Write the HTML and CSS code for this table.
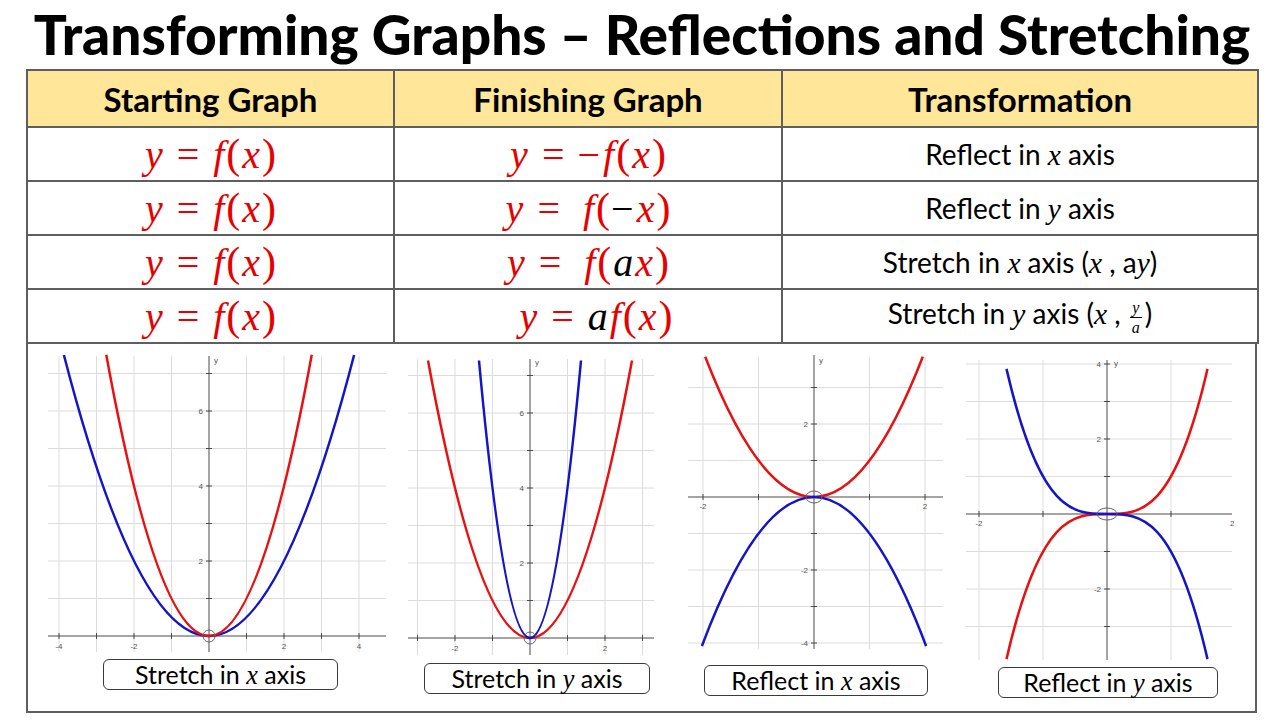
FILE: index.html
```html
<!DOCTYPE html>
<html lang="en">
<head>
<meta charset="utf-8">
<title>Transforming Graphs – Reflections and Stretching</title>
<link rel="stylesheet" href="styles.css">
</head>
<body>
<h1 class="title">Transforming Graphs – Reflections and Stretching</h1>
<table class="summary">
  <colgroup><col class="col-start"><col class="col-finish"><col class="col-trans"></colgroup>
  <thead>
    <tr class="head-row"><th>Starting Graph</th><th>Finishing Graph</th><th>Transformation</th></tr>
  </thead>
  <tbody>
    <tr>
      <td><span class="math"><i>y</i><span class="eq">=</span><i>f</i><span class="par">(</span><i>x</i><span class="par">)</span></span></td>
      <td><span class="math"><i>y</i><span class="eq">=</span><span class="neg">−</span><i>f</i><span class="par">(</span><i>x</i><span class="par">)</span></span></td>
      <td class="trans">Reflect in <i class="v">x</i> axis</td>
    </tr>
    <tr>
      <td><span class="math"><i>y</i><span class="eq">=</span><i>f</i><span class="par">(</span><i>x</i><span class="par">)</span></span></td>
      <td><span class="math"><i>y</i><span class="eq wide">=</span><i>f</i><span class="par">(</span><span class="black neg">−</span><i>x</i><span class="par">)</span></span></td>
      <td class="trans">Reflect in <i class="v">y</i> axis</td>
    </tr>
    <tr>
      <td><span class="math"><i>y</i><span class="eq">=</span><i>f</i><span class="par">(</span><i>x</i><span class="par">)</span></span></td>
      <td><span class="math"><i>y</i><span class="eq wide">=</span><i>f</i><span class="par">(</span><i class="black">a</i><i>x</i><span class="par">)</span></span></td>
      <td class="trans">Stretch in <i class="v">x</i> axis (<i class="v">x</i> , a<i class="v">y</i>)</td>
    </tr>
    <tr>
      <td><span class="math"><i>y</i><span class="eq">=</span><i>f</i><span class="par">(</span><i>x</i><span class="par">)</span></span></td>
      <td><span class="math shift"><i>y</i><span class="eq">=</span><i class="black">a</i><i>f</i><span class="par">(</span><i>x</i><span class="par">)</span></span></td>
      <td class="trans">Stretch in <i class="v">y</i> axis (<i class="v">x</i> , <span class="frac"><span class="num">y</span><span class="den">a</span></span><span class="close">)</span></td>
    </tr>
  </tbody>
</table>

<section class="graphs">
  <figure class="fig fig-1">
    <svg width="340" height="302" viewBox="0 0 340 302">
      <path class="grid" d="M11 4V300M48.5 4V300M86 4V300M123.5 4V300M198.5 4V300M236 4V300M273.5 4V300M311 4V300M0 246.5H338M0 209H338M0 171.5H338M0 134H338M0 96.5H338M0 59H338M0 21.5H338"/>
      <path class="axis" d="M0 284H338M161 4V300"/>
      <path class="axis" d="M11 281V287M48.5 281V287M86 281V287M123.5 281V287M198.5 281V287M236 281V287M273.5 281V287M311 281V287M158 246.5H164M158 209H164M158 171.5H164M158 134H164M158 96.5H164M158 59H164M158 21.5H164"/>
      <g class="tick">
        <text x="11" y="297" text-anchor="middle">-4</text>
        <text x="86" y="297" text-anchor="middle">-2</text>
        <text x="236" y="297" text-anchor="middle">2</text>
        <text x="311" y="297" text-anchor="middle">4</text>
        <text x="155" y="212" text-anchor="end">2</text>
        <text x="155" y="137" text-anchor="end">4</text>
        <text x="155" y="62" text-anchor="end">6</text>
        <text x="166" y="11">y</text>
      </g>
      <path class="curve blue" d="M15.9 3 Q161 565 306.1 3"/>
      <path class="curve red" d="M58.25 2.75 Q161 565.25 263.75 2.75"/>
      <circle class="origin" cx="161" cy="284" r="6"/>
    </svg>
    <div class="label label-1"><span>Stretch in <i class="v">x</i> axis</span></div>
  </figure>

  <figure class="fig fig-2">
    <svg width="248" height="302" viewBox="0 0 248 302">
      <path class="grid" d="M9.5 4V300M47 4V300M84.5 4V300M159.5 4V300M197 4V300M234.5 4V300M0 245.5H246M0 208H246M0 170.5H246M0 133H246M0 95.5H246M0 58H246M0 20.5H246"/>
      <path class="axis" d="M0 283H246M122 4V300"/>
      <path class="axis" d="M9.5 280V286M47 280V286M84.5 280V286M159.5 280V286M197 280V286M234.5 280V286M119 245.5H125M119 208H125M119 170.5H125M119 133H125M119 95.5H125M119 58H125M119 20.5H125"/>
      <g class="tick">
        <text x="47" y="296" text-anchor="middle">-2</text>
        <text x="197" y="296" text-anchor="middle">2</text>
        <text x="116" y="211" text-anchor="end">2</text>
        <text x="116" y="136" text-anchor="end">4</text>
        <text x="116" y="61" text-anchor="end">6</text>
        <text x="127" y="10">y</text>
      </g>
      <path class="curve red" d="M20 5.5 Q122 560.5 224 5.5"/>
      <path class="curve blue" d="M71 5.5 Q122 560.5 173 5.5"/>
      <circle class="origin" cx="122" cy="283" r="6"/>
    </svg>
    <div class="label label-2"><span>Stretch in <i class="v">y</i> axis</span></div>
  </figure>

  <figure class="fig fig-3">
    <svg width="256" height="296" viewBox="0 0 256 296">
      <path class="grid" d="M15 2V294M70.5 2V294M181.5 2V294M237 2V294M0 32.5H255M0 69H255M0 105.5H255M0 178.5H255M0 215H255M0 251.5H255M0 288H255"/>
      <path class="axis" d="M0 142H255M126 0V294"/>
      <path class="axis" d="M15 139V145M70.5 139V145M181.5 139V145M237 139V145M123 32.5H129M123 69H129M123 105.5H129M123 178.5H129M123 215H129M123 251.5H129M123 288H129"/>
      <g class="tick">
        <text x="15" y="154" text-anchor="middle">-2</text>
        <text x="237" y="154" text-anchor="middle">2</text>
        <text x="120" y="72" text-anchor="end">2</text>
        <text x="120" y="218" text-anchor="end">-2</text>
        <text x="120" y="291" text-anchor="end">-4</text>
        <text x="131" y="8">y</text>
      </g>
      <path class="curve red" d="M17.2 1.8 Q126 282.2 234.8 1.8"/>
      <path class="curve blue" d="M13.9 291 Q126 -7 238.1 291"/>
      <ellipse class="origin" cx="126" cy="142" rx="8" ry="6"/>
    </svg>
    <div class="label label-3"><span>Reflect in <i class="v">x</i> axis</span></div>
  </figure>

  <figure class="fig fig-4">
    <svg width="268" height="302" viewBox="0 0 268 302">
      <path class="grid" d="M13 2V302M77 2V302M205 2V302M0 6H266M0 43.5H266M0 81H266M0 118.5H266M0 193.5H266M0 231H266M0 268.5H266"/>
      <path class="axis" d="M0 156H266M141 2V302"/>
      <path class="axis" d="M13 153V159M77 153V159M205 153V159M138 6H144M138 43.5H144M138 81H144M138 118.5H144M138 193.5H144M138 231H144M138 268.5H144"/>
      <g class="tick">
        <text x="13" y="168" text-anchor="middle">-2</text>
        <text x="264" y="168">2</text>
        <text x="135" y="9" text-anchor="end">4</text>
        <text x="135" y="84" text-anchor="end">2</text>
        <text x="135" y="234" text-anchor="end">-2</text>
        <text x="148" y="8">y</text>
      </g>
      <path class="curve red" d="M40.5 301.1 C107.5 10.9 174.5 301.1 241.5 10.9"/>
      <path class="curve blue" d="M40.5 10.9 C107.5 301.1 174.5 10.9 241.5 301.1"/>
      <ellipse class="origin" cx="141" cy="156" rx="10" ry="6"/>
    </svg>
    <div class="label label-4"><span>Reflect in <i class="v">y</i> axis</span></div>
  </figure>
</section>
</body>
</html>
```

FILE: styles.css
```css
html, body {
  margin: 0;
  padding: 0;
  background: #ffffff;
}

body {
  width: 1280px;
  height: 720px;
  overflow: hidden;
  font-family: Lato, "Open Sans", sans-serif;
  color: #000;
}

.title {
  margin: 0;
  height: 69px;
  padding-left: 4px;
  font-family: Lato, sans-serif;
  font-weight: 900;
  font-size: 55px;
  line-height: 68px;
  text-align: center;
  white-space: nowrap;
}

.summary {
  margin-left: 26px;
  width: 1231px;
  border-collapse: collapse;
  table-layout: fixed;
}

.col-start { width: 367px; }
.col-finish { width: 388px; }
.col-trans { width: 476px; }

.summary th,
.summary td {
  border: 2px solid #5e5e5e;
  padding: 0;
  text-align: center;
  vertical-align: middle;
}

.summary th {
  height: 55px;
  background: #ffe699;
  font-family: Lato, sans-serif;
  font-weight: 700;
  font-size: 33px;
}

.summary td {
  height: 52px;
}

.math {
  display: inline-block;
  font-family: "Liberation Serif", "Times New Roman", serif;
  font-size: 40px;
  color: #e60000;
  line-height: 1;
  white-space: nowrap;
}

.math i {
  font-style: italic;
  padding: 0 1px;
}

.math .par {
  font-size: 42px;
  padding: 0 1px;
}

.math .eq {
  font-style: normal;
  margin: 0 13px;
}

.math .eq.wide {
  margin-right: 22px;
}

.math .neg {
  margin-right: 2px;
}

.math .black {
  color: #000;
}

.math.shift {
  margin-left: 16px;
}

.trans {
  font-family: Lato, sans-serif;
  font-size: 28px;
  white-space: nowrap;
}

.v {
  font-family: "Liberation Serif", "Times New Roman", serif;
  font-style: italic;
  font-size: 1.05em;
}

.frac {
  display: inline-flex;
  flex-direction: column;
  align-items: center;
  vertical-align: middle;
  font-family: "Liberation Serif", "Times New Roman", serif;
  font-style: italic;
  font-size: 16px;
  line-height: 19px;
  margin: 0 3px 0 2px;
  position: relative;
  top: 1px;
}

.frac .num {
  padding: 0 2px;
}

.frac .den {
  border-top: 1px solid #000;
  padding: 0 2px;
}

.close {
  display: inline-block;
}

.graphs {
  margin-left: 26px;
  width: 1231px;
  height: 369px;
  box-sizing: border-box;
  border: 2px solid #5e5e5e;
  border-top: none;
  display: flex;
  align-items: flex-start;
}

.fig {
  margin: 0;
  display: flex;
  flex-direction: column;
  align-items: center;
}

.fig svg {
  display: block;
}

.fig-1 { margin-left: 20px; padding-top: 8px; }
.fig-2 { margin-left: 20px; padding-top: 11px; }
.fig-3 { margin-left: 32px; padding-top: 11px; }
.fig-4 { margin-left: 22px; padding-top: 14px; }

.grid {
  fill: none;
  stroke: #dcdcdc;
  stroke-width: 1;
}

.axis {
  fill: none;
  stroke: #4a4a4a;
  stroke-width: 1;
}

.tick text {
  font-family: "Liberation Sans", Arial, sans-serif;
  font-size: 8px;
  fill: #555;
}

.curve {
  fill: none;
  stroke-width: 2.5;
}

.red { stroke: #e81010; }
.blue { stroke: #1414c8; }

.origin {
  fill: none;
  stroke: #666;
  stroke-width: 1;
}

.label {
  box-sizing: border-box;
  height: 31px;
  border: 1px solid #3a3a3a;
  border-radius: 6px;
  display: flex;
  align-items: center;
  justify-content: center;
  font-family: Lato, sans-serif;
  font-size: 25px;
  white-space: nowrap;
}

.label-1 { width: 235px; margin-top: 5px; margin-left: 5px; }
.label-2 { width: 226px; margin-top: 6px; margin-left: 10px; }
.label-3 { width: 224px; margin-top: 14px; }
.label-4 { width: 220px; margin-top: 7px; margin-left: 16px; }
```
